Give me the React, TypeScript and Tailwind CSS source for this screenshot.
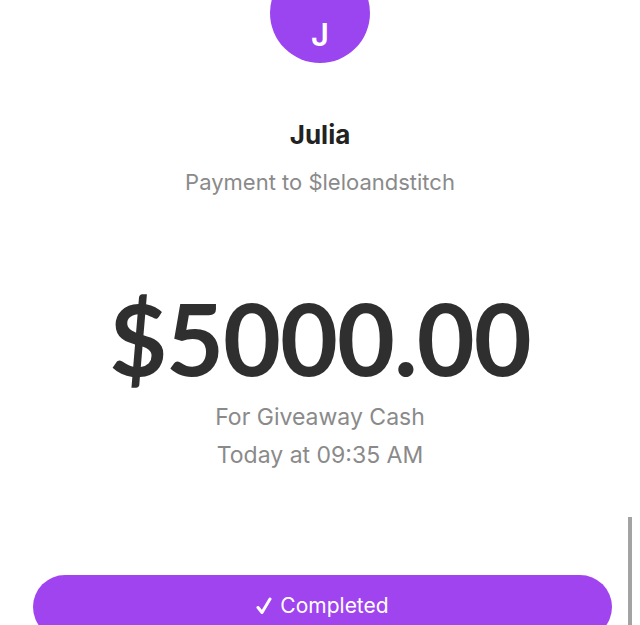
// Payment receipt screen: avatar, payee, amount, note and status button.

export default function App() {
  return (
    <div className="relative h-[625px] w-[640px] overflow-hidden bg-white font-['Inter',sans-serif]">
      <div className="flex flex-col items-center">
        <div className="-mt-[37px] flex h-[100px] w-[100px] items-center justify-center rounded-full bg-[#9b45f0] pt-[42px]">
          <span className="text-[31px] leading-none font-semibold text-white">J</span>
        </div>

        <h1 className="mt-[59px] text-[26px] leading-none font-bold text-[#222]">Julia</h1>
        <p className="mt-[23px] text-[22px] leading-none text-[#8a8a8a]">Payment to $leloandstitch</p>

        <div className="mt-[94px] font-['Lato',sans-serif] text-[100px] leading-none font-bold tracking-[-1px] text-[#2f2f2f]">
          $5000.00
        </div>

        <p className="mt-[19px] text-[23px] leading-none text-[#8a8a8a]">For Giveaway Cash</p>
        <p className="mt-[15px] text-[23px] leading-none text-[#8a8a8a]">Today at 09:35 AM</p>
      </div>

      <div className="absolute top-[575px] left-[33px] flex h-[64px] w-[579px] items-start justify-center gap-[8px] rounded-full bg-[#a044f0] pt-[20px]">
        <svg width="16" height="18" viewBox="0 0 16 18" className="mt-[2px]">
          <path d="M2 10.5 L6 15.5 L14 2" fill="none" stroke="white" strokeWidth="3" strokeLinecap="round" strokeLinejoin="round" />
        </svg>
        <span className="text-[21px] leading-none text-white">Completed</span>
      </div>

      {/* scroll indicator */}
      <div className="absolute top-[517px] right-[8px] h-[108px] w-[4px] bg-[#a3a3a3]" />
    </div>
  );
}
